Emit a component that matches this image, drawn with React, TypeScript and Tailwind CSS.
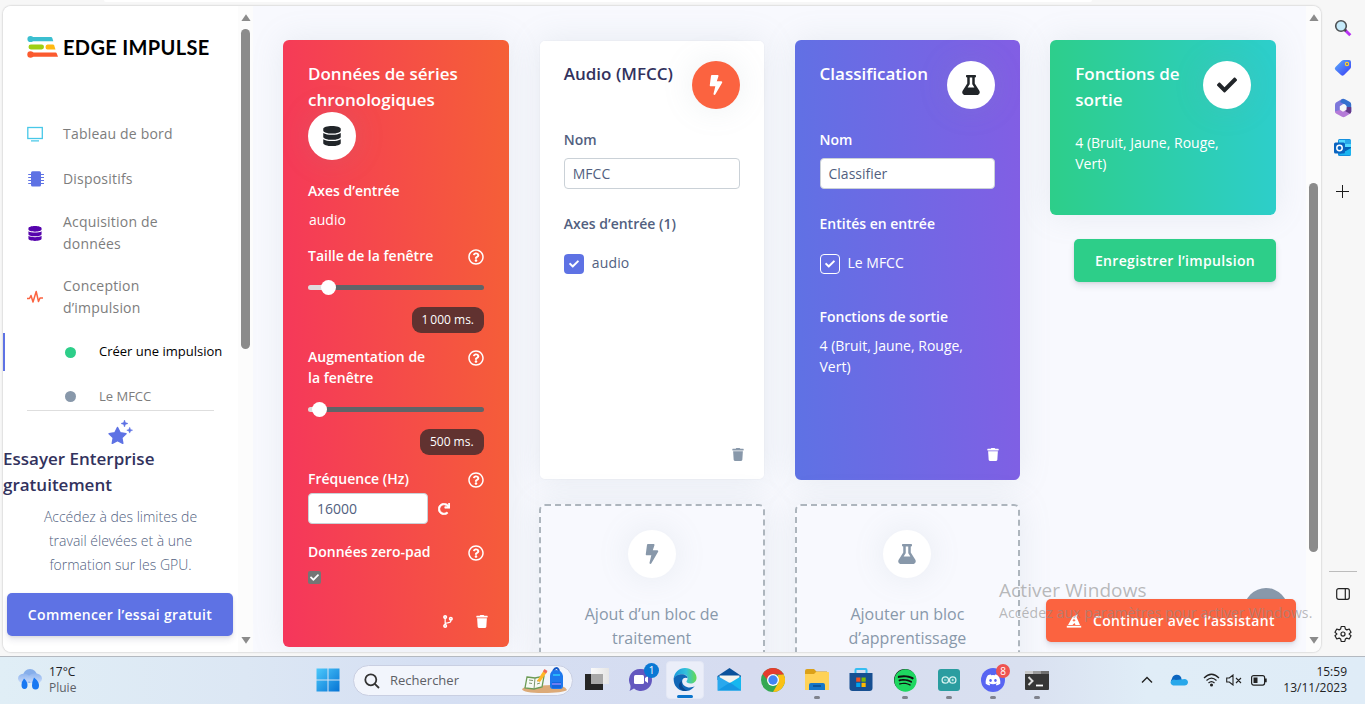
import React from 'react';
import { FaBolt, FaCheck, FaCodeBranch, FaDatabase, FaDiscord, FaFlask, FaRedo, FaRegQuestionCircle, FaSpotify, FaTrash } from 'react-icons/fa';

function Logo() {
  return (
    <div className="ml-6 flex h-6 items-center gap-[5px]">
      <svg width="31" height="24" viewBox="0 0 31 24">
        <g fill="#3bbfd0"><circle cx="3.5" cy="4" r="3.1" /><path d="M3 2h21q1 0 1.300 1l1 3.200H3z" /></g>
        <rect x="1.500" y="9.500" width="15.500" height="5" rx="2.400" fill="#9ecf14" />
        <path d="M20.500 9.500h5.500q.8 0 1.200 1l1.300 4h-8q-2 0-2-2.500t2-2.500z" fill="#ffb911" />
        <g fill="#fb5a2e"><circle cx="3.500" cy="19.500" r="3.200" /><path d="M3 17.500h25.500q1 0 1.300 1l1.200 3.300H3z" /></g>
      </svg>
      <span className="whitespace-nowrap font-['Lato',sans-serif] text-[20px] font-bold leading-6 tracking-[0.35px] text-black">EDGE IMPULSE</span>
    </div>
  );
}

function NavItem({ icon, children, height }: { icon: React.ReactNode; children: React.ReactNode; height: string }) {
  return (
    <div className={`flex items-center pl-6 text-[14px] leading-[22px] tracking-[0.2px] text-[#7d7d7d] ${height}`}>
      <span className="flex w-9 shrink-0">{icon}</span>
      <span>{children}</span>
    </div>
  );
}

function ScrollBar({ thumb }: { thumb: string }) {
  return (
    <div className="flex h-full w-[15px] shrink-0 flex-col items-center bg-[#fcfcfc] py-2">
      <svg width="10" height="7" className="shrink-0"><path d="M5 0.300L9.600 7H.4z" fill="#8b8b8b" /></svg>
      <div className={`w-[9px] shrink-0 rounded-full bg-[#8b8b8b] ${thumb}`} />
      <svg width="10" height="7" className="mt-auto shrink-0"><path d="M.4 0h9.200L5 6.700z" fill="#8b8b8b" /></svg>
    </div>
  );
}

function Sidebar() {
  return (
    <aside className="flex w-[235px] shrink-0 flex-col bg-white">
      <div className="h-[29px]" />
      <Logo />
      <div className="h-[52px]" />
      <NavItem height="h-[45px]" icon={<svg width="16" height="16" viewBox="0 0 16 16" fill="none" stroke="#48c8e8" strokeWidth="1.300"><rect x=".8" y="1.500" width="14.500" height="11" /><path d="M4 14.800h8" /></svg>}>Tableau de bord</NavItem>
      <NavItem height="h-[45px]" icon={<svg width="18" height="16" viewBox="0 0 18 16"><rect x="4" y=".3" width="10" height="15.200" rx="1.500" fill="#5e72e4" /><path d="M1.200 3.500H17M1.200 6.500H17M1.200 9.500H17M1.200 12.500H17" stroke="#5e72e4" strokeWidth="1.200" /></svg>}>Dispositifs</NavItem>
      <NavItem height="h-[64px]" icon={<FaDatabase className="ml-[1px] h-[15px] w-[14px] text-[#5603ad]" />}>Acquisition de<br />données</NavItem>
      <NavItem height="h-[64px]" icon={<svg width="16" height="14" viewBox="0 0 16 14" fill="none" stroke="#fb6340" strokeWidth="1.500" strokeLinejoin="round"><path d="M0 8.500h2.500L4 5.500l2 6.500L9.200 1.500 11.500 11.500 13 8H16" /></svg>}>Conception<br />d’impulsion</NavItem>
      <div className="flex h-[38px] items-center border-l-2 border-[#5e72e4] pl-[60px] text-[13px] text-black mt-[4px]">
        <i className="h-[11px] w-[11px] rounded-full bg-[#2dce89]" /><span className="ml-[23px] whitespace-nowrap">Créer une impulsion</span>
      </div>
      <div className="mt-[6px] flex h-[33px] items-start overflow-hidden pl-[62px] pt-[9px] text-[13px] text-[#7d7d7d]">
        <i className="mt-[5px] h-[11px] w-[11px] rounded-full bg-[#8898aa]" /><span className="ml-[23px] leading-5">Le MFCC</span>
      </div>
      <div className="ml-6 h-px w-[187px] shrink-0 bg-[#dedede]" />
      <svg className="ml-[105px] mt-[8px] shrink-0" width="26" height="26" viewBox="0 0 26 26" fill="#5e72e4" stroke="#5e72e4" strokeLinejoin="round">
        <path strokeWidth="1.500" d="M9.500 8.500l2.700 5.300 5.800.9-4.200 4 1 5.600-5.300-2.700-5.200 2.700 1-5.600-4.200-4 5.800-.9z" />
        <path strokeWidth=".5" d="M16.500 1l.9 2.600 2.600.9-2.600.9-.9 2.600-.9-2.600L13 4.500l2.600-.9zM21.700 8.300l.8 2.100 2.100.8-2.100.8-.8 2.100-.8-2.100-2.100-.8 2.100-.8z" />
      </svg>
      <div className="mt-[1px] text-[17px] font-semibold leading-[26px] text-[#32325d]">Essayer Enterprise gratuitement</div>
      <p className="mt-[7px] text-center text-[14px] font-light leading-6 text-[#525f7f]">Accédez à des limites de<br />travail élevées et à une<br />formation sur les GPU.</p>
      <button className="ml-1 mt-4 h-[43px] w-[226px] shrink-0 whitespace-nowrap rounded-[5px] bg-[#5e72e4] text-[14px] font-semibold tracking-[0.35px] text-white shadow-[0_4px_6px_rgba(50,50,93,.11),0_1px_3px_rgba(0,0,0,.08)]">Commencer l’essai gratuit</button>
    </aside>
  );
}

function Disc({ children, className = 'bg-white text-[#212529]' }: { children: React.ReactNode; className?: string }) {
  return <div className={`flex h-12 w-12 shrink-0 items-center justify-center rounded-full shadow-[0_0_32px_rgba(136,152,170,.15)] ${className}`}>{children}</div>;
}

function Label({ children, className = '' }: { children: React.ReactNode; className?: string }) {
  return <div className={`text-[14px] font-semibold leading-[21px] ${className}`}>{children}</div>;
}

function HelpRow({ children, className }: { children: React.ReactNode; className: string }) {
  return (
    <div className={`flex items-start justify-between ${className}`}>
      <Label>{children}</Label>
      <FaRegQuestionCircle className="mt-[4px] h-4 w-4 shrink-0" />
    </div>
  );
}

function RangeBar({ fill, className }: { fill: string; className: string }) {
  return (
    <div className={`flex h-[15px] items-center ${className}`}>
      <div className={`h-[5px] rounded-l-full bg-[#e0dcdc] ${fill}`} />
      <div className="z-10 -mx-[2px] h-[15px] w-[15px] rounded-full bg-white" />
      <div className="h-[5px] flex-1 rounded-r-full bg-[#606468]" />
    </div>
  );
}

function Pill({ children, className }: { children: React.ReactNode; className: string }) {
  return <div className={`ml-auto flex h-[26px] items-center justify-center rounded-[9px] bg-[#613230] text-[12px] font-medium text-white ${className}`}>{children}</div>;
}

const shadow = 'shadow-[0_0_32px_rgba(136,152,170,.15)]';
const input = 'flex h-[31px] items-center rounded-[4px] border border-[#cad1d7] bg-white px-2 text-[14px] text-[#525f7f]';

function Cards() {
  return (
    <div className="grid grid-cols-4 items-start gap-[30px] pl-[30px] pr-[30px] pt-[34px]">
      <section className={`flex h-[607px] flex-col rounded-[6px] bg-[linear-gradient(87deg,#f5365c_0%,#f56036_100%)] px-[25px] pt-[21px] text-white ${shadow}`}>
        <h2 className="text-[17px] font-semibold leading-[26px]">Données de séries chronologiques</h2>
        <div className="-mt-[1px]"><Disc><FaDatabase className="h-5 w-5" /></Disc></div>
        <Label className="mt-[20px]">Axes d’entrée</Label>
        <div className="mt-2 pl-px text-[14px] leading-[21px]">audio</div>
        <HelpRow className="mt-[15px]">Taille de la fenêtre</HelpRow>
        <RangeBar fill="w-[15px]" className="mt-[14px]" />
        <Pill className="mt-[12px] w-[72px]">1{'\u2009'}000 ms.</Pill>
        <HelpRow className="mt-[13px]">Augmentation de<br />la fenêtre</HelpRow>
        <RangeBar fill="w-[6px]" className="mt-[14px]" />
        <Pill className="mt-[12px] w-[64px]">500 ms.</Pill>
        <HelpRow className="mt-[13px]">Fréquence (Hz)</HelpRow>
        <div className="mt-[4px] flex items-center gap-[10px]"><div className={`${input} w-[120px]`}>16000</div><FaRedo className="h-3 w-3" stroke="white" strokeWidth="24" /></div>
        <HelpRow className="mt-[17px]">Données zero-pad</HelpRow>
        <div className="mt-[9px] flex h-[13px] w-[13px] items-center justify-center rounded-[2px] bg-[#757575]"><FaCheck className="h-[9px] w-[9px]" /></div>
        <div className="mt-[31px] flex items-center justify-end gap-[22px]"><FaCodeBranch className="h-[13px] w-[12px]" /><FaTrash className="-mr-[4px] h-[13px] w-[12px]" /></div>
      </section>

      <div className="flex flex-col gap-6">
        <section className={`flex h-[440px] flex-col rounded-[6px] border border-black/[.015] bg-white bg-clip-padding px-6 pt-5 text-[#525f7f] ${shadow}`}>
          <div className="flex items-start justify-between">
            <h2 className="whitespace-nowrap text-[17px] font-semibold leading-[26px] text-[#32325d]">Audio (MFCC)</h2>
            <Disc className="bg-[#fb6340] text-white"><FaBolt className="h-5 w-5" /></Disc>
          </div>
          <Label className="mt-[20px]">Nom</Label>
          <div className={`${input} mt-[8px]`}>MFCC</div>
          <Label className="mt-[24px]">Axes d’entrée (1)</Label>
          <div className="mt-[20px] flex items-center text-[14px] leading-5"><span className="mr-2 flex h-5 w-5 items-center justify-center rounded-[4px] bg-[#5e72e4] text-white"><FaCheck className="h-[10px] w-[10px]" /></span><span className="-mt-[2px] tracking-[0.15px]">audio</span></div>
          <FaTrash className="-mr-[4px] mb-[18px] ml-auto mt-auto h-[13px] w-[12px] text-[#8898aa]" />
        </section>
        <Placeholder icon={<FaBolt className="h-5 w-5" />}>Ajout d’un bloc de<br />traitement</Placeholder>
      </div>

      <div className="flex flex-col gap-6">
        <section className={`flex h-[440px] flex-col rounded-[6px] bg-[linear-gradient(87deg,#5e72e4_0%,#825ee4_100%)] px-[25px] pt-[21px] text-white ${shadow}`}>
          <div className="flex items-start justify-between">
            <h2 className="whitespace-nowrap text-[17px] font-semibold leading-[26px]">Classification</h2>
            <Disc><FaFlask className="h-5 w-5" /></Disc>
          </div>
          <Label className="mt-[20px]">Nom</Label>
          <div className={`${input} mt-[8px]`}>Classifier</div>
          <Label className="mt-[24px]">Entités en entrée</Label>
          <div className="mt-[20px] flex items-center text-[14px] leading-5"><span className="mr-2 flex h-5 w-5 items-center justify-center rounded-[4px] border border-white"><FaCheck className="h-[10px] w-[10px]" /></span><span className="-mt-[2px]">Le MFCC</span></div>
          <Label className="mt-[32px]">Fonctions de sortie</Label>
          <div className="mt-2 text-[14px] leading-[21px]">4 (Bruit, Jaune, Rouge,<br />Vert)</div>
          <FaTrash className="-mr-[4px] mb-[19px] ml-auto mt-auto h-[13px] w-[12px]" />
        </section>
        <Placeholder icon={<FaFlask className="h-5 w-5" />}>Ajouter un bloc<br />d’apprentissage</Placeholder>
      </div>

      <div className="flex flex-col gap-6">
        <section className={`flex h-[175px] flex-col rounded-[6px] bg-[linear-gradient(87deg,#2dce89_0%,#2dcecc_100%)] px-[25px] pt-[21px] text-white ${shadow}`}>
          <div className="flex items-start justify-between">
            <h2 className="text-[17px] font-semibold leading-[26px]">Fonctions de<br />sortie</h2>
            <Disc><FaCheck className="h-5 w-5" /></Disc>
          </div>
          <div className="mt-[19px] text-[14px] leading-[21px]">4 (Bruit, Jaune, Rouge,<br />Vert)</div>
        </section>
        <button className="ml-auto h-[43px] w-[202px] whitespace-nowrap rounded-[5px] bg-[#2dce89] text-[14px] font-semibold tracking-[0.35px] text-white shadow-[0_4px_6px_rgba(50,50,93,.11),0_1px_3px_rgba(0,0,0,.08)]">Enregistrer l’impulsion</button>
      </div>
    </div>
  );
}

function Placeholder({ icon, children }: { icon: React.ReactNode; children: React.ReactNode }) {
  return (
    <section className={`flex h-[230px] flex-col items-center rounded-[6px] border-2 border-dashed border-[#adb5bd] bg-[#f8f9fe] pt-6 text-center ${shadow}`}>
      <Disc className="bg-white text-[#8898aa]">{icon}</Disc>
      <div className="mt-6 text-[16px] leading-6 text-[#8898aa]">{children}</div>
    </section>
  );
}

function EdgeRail() {
  return (
    <aside className="flex w-[43px] shrink-0 flex-col items-center">
      <svg className="mt-[17px] shrink-0" width="18" height="18" viewBox="0 0 18 18"><path d="M11 11l5.300 5.300" stroke="#b832f2" strokeWidth="3" /><path d="M10 10l2 2" stroke="#444" strokeWidth="2.500" /><circle cx="7" cy="7" r="5.300" fill="#c5eafa" stroke="#4d5053" strokeWidth="1.600" /></svg>
      <svg className="mt-[22px] shrink-0" width="18" height="18" viewBox="0 0 18 18"><defs><linearGradient id="tag" x2="1" y2="1"><stop stopColor="#5bb0fb" /><stop offset="1" stopColor="#3a3af5" /></linearGradient></defs><path d="M10 1h5q2 0 2 2v5q0 1-1 2l-6 6q-1.500 1.500-3 0L1.500 11Q0 9.500 1.500 8l6-6Q8.500 1 10 1z" fill="url(#tag)" /><circle cx="13" cy="5" r="1.600" fill="#4a64d0" stroke="#ffd42a" strokeWidth="1.200" /></svg>
      <svg className="mt-[21px] shrink-0" width="18" height="20" viewBox="0 0 18 20"><path d="M8 1L2 4.500Q1 5 1 7v7l6 3V9.500q0-2 2-3l4-2z" fill="#7d78db" /><path d="M8 1q1.500-.8 3 .2L16 4q1.200.8 1.200 2.500V14l-4.500-2.500V9q0-1.500-1.500-2.500L6 4z" fill="#3570ce" /><path d="M17.200 10v3.500q0 1.500-1.200 2.300l-5 3q-1.500.9-3 0l-6-3.300Q1 14.800 1 13.300l6-1.500 2 1.200 2.500-1z" fill="#b57bd8" /><path d="M17.200 9v4.500q0 1.500-1.200 2.300L11 13q2-1 1.800-4z" fill="#653989" /><path d="M9 6.300l3.200 1.900v3.600L9 13.700l-3.200-1.900V8.200z" fill="#f7f7f7" /></svg>
      <svg className="mt-[21px] shrink-0" width="17" height="17" viewBox="0 0 17 17"><rect x="4" width="13" height="17" rx="1.500" fill="#1490df" /><path d="M5 1h12v7H5z" fill="#50d9ff" /><path d="M11 1h6v4h-6z" fill="#28a8ea" /><path d="M11 8h6v4h-6z" fill="#0364b8" /><path d="M5 16l12-7v7z" fill="#1bb5f0" /><rect y="3.500" width="11" height="11" rx="1.500" fill="#0a64c0" /><circle cx="5.500" cy="9" r="2.700" fill="none" stroke="#fff" strokeWidth="1.500" /></svg>
      <svg className="mt-[29px] shrink-0" width="13" height="13"><path d="M6.500 0v13M0 6.500h13" stroke="#1c1c1c" strokeWidth="1" /></svg>
      <div className="mt-auto h-px w-7 bg-[#bcbcbc]" />
      <svg className="mt-[16px]" width="14" height="12" fill="none" stroke="#222" strokeWidth="1.200"><rect x=".7" y=".7" width="12.600" height="10.600" rx="2" /><path d="M9.300 1v10" /></svg>
      <svg className="mb-[13px] mt-[25px]" width="18" height="18" viewBox="0 0 24 24" fill="none" stroke="#222" strokeWidth="1.600" strokeLinejoin="round"><path d="M9.600 2h4.800l.7 3.300 2 1.200 3.200-1.100 2.400 4.200-2.500 2.200v.4l2.500 2.200-2.400 4.200-3.200-1.100-2 1.200-.7 3.300H9.600l-.7-3.300-2-1.200-3.200 1.100-2.400-4.200 2.500-2.200v-.4L1.300 9.600l2.400-4.200 3.200 1.100 2-1.200z" /><circle cx="12" cy="12" r="2.700" /></svg>
    </aside>
  );
}

function AppIcon({ children, running = false, badge }: { children: React.ReactNode; running?: boolean; badge?: React.ReactNode }) {
  return (
    <div className="relative flex h-[47px] w-11 shrink-0 flex-col items-center pt-[11px]">
      <div className="flex h-6 w-6 items-center justify-center">{children}</div>
      {running && <div className="mt-[4px] h-[3px] w-[6px] rounded-full bg-[#7f828c]" />}
      {badge}
    </div>
  );
}

function Taskbar() {
  return (
    <footer className="flex h-12 shrink-0 border-t border-[#b4b9c0] bg-[linear-gradient(90deg,#e0eef6_0%,#dce7f4_18%,#d5dff3_32%,#d6dcf0_55%,#d9e0f0_75%,#e0edf7_84%,#dfecf7_100%)] font-['Open_Sans','Noto_Sans',sans-serif]">
      <div className="flex w-[306px] items-start pl-[17px] pt-[8px]">
        <svg width="26" height="26" viewBox="0 0 26 26"><defs><linearGradient id="cl" y2="1" x2="0"><stop stopColor="#8fb5ef" /><stop offset="1" stopColor="#cbdcfa" /></linearGradient></defs><circle cx="13" cy="11" r="7" fill="#86aeea" /><ellipse cx="7" cy="13.500" rx="6" ry="4.800" fill="url(#cl)" /><ellipse cx="18" cy="13.500" rx="7" ry="5.200" fill="url(#cl)" /><path d="M7 13.500q3.500 3 3.500 6.500 0 4-3 4T4.500 20q0-3.500 2.500-6.500zM17 12.500q5 4 5 8 0 4-3.500 4t-3.500-4q0-4 2-8z" fill="#1878f2" /></svg>
        <div className="-mt-px ml-[6px] text-[12px] leading-4 text-[#202124]">17°C<br /><span className="text-[#5c6066]">Pluie</span></div>
      </div>
      <AppIcon><svg width="24" height="24"><defs><linearGradient id="win" x2="1" y2="1"><stop stopColor="#4cc9fb" /><stop offset="1" stopColor="#0673d4" /></linearGradient></defs><path d="M.5.500h11v11H.5zM12.500.5h11v11h-11zM.5 12.500h11v11H.5zM12.500 12.500h11v11h-11z" fill="url(#win)" /></svg></AppIcon>
      <div className="ml-[3px] mt-[8px] flex h-[31px] w-[220px] items-center rounded-full border border-[#c9cfe2] bg-[#f2f5fc] pl-[10px]">
        <svg width="16" height="16" fill="none" stroke="#333" strokeWidth="1.800"><circle cx="6.800" cy="6.800" r="5.500" /><path d="M10.800 10.800l4.200 4.200" /></svg>
        <span className="ml-[10px] text-[13px] text-[#5d6066]">Rechercher</span>
        <svg className="ml-auto mr-[4px]" width="46" height="28" viewBox="0 0 46 28"><path d="M0 22q3-3 10-3l20-1q13 0 15 5-4 3-24 3T0 22z" fill="#dcaa78" /><path d="M5 10l8 1 9-2-2 11-8 2-9-1z" fill="#f6faf4" stroke="#6b9b55" strokeWidth="1.300" /><path d="M13 11l-1 11M7 13l4 .5M7 16l3 .5M15 14l4-1M15 17l3-1" stroke="#7d966f" /><path d="M15 14l7-11 3 2-7 10z" fill="#ffb629" /><path d="M21 4.500L22.500 2l3 2-1.500 2.500z" fill="#f06a5c" /><path d="M31 4q4-6 6 0" fill="none" stroke="#1559c7" strokeWidth="2" /><path d="M28 9q0-6 6-6t7 6v10q0 3-3 3h-7q-3 0-3-3z" fill="#1d78ed" /><path d="M30 15h9v6h-9z" fill="#1465dd" /><path d="M30 17h9" stroke="#9c8dfd" strokeWidth="1.300" /><path d="M31 8h7" stroke="#2ab5fa" strokeWidth="2" /></svg>
      </div>
      <div className="ml-[2px] flex">
        <AppIcon><svg width="24" height="24"><defs><linearGradient id="tv" x2="1"><stop stopColor="#fafafa" /><stop offset="1" stopColor="#e5e5e5" /></linearGradient></defs><rect y="6" width="18" height="16" fill="#262626" /><rect x="6" width="18" height="16" fill="url(#tv)" /><rect x="6" y="6" width="12" height="10" fill="#a9a9a9" /></svg></AppIcon>
        <AppIcon badge={<span className="absolute right-[4px] top-[6px] flex h-[15px] w-[15px] items-center justify-center rounded-full bg-[#0a78d4] text-[10px] text-white">1</span>}><svg width="24" height="24"><path d="M12 1a11 11 0 1 1-7 19.500L.5 23q1.500-3 .8-6A11 11 0 0 1 12 1z" fill="#6358bf" /><rect x="5" y="7" width="10" height="9" rx="1.500" fill="#fff" /><path d="M16 10l3-2v7l-3-2z" fill="#fff" /></svg></AppIcon>
        <div className="flex h-[47px] w-11 items-start justify-center pt-[4px]"><div className="flex h-[38px] w-[38px] flex-col items-center rounded-[4px] border border-[#e4e8f5] bg-[#ebeef9] pt-[6px]"><svg width="24" height="24" viewBox="0 0 24 24"><defs><linearGradient id="ed" x2="1"><stop stopColor="#1999dd" /><stop offset=".55" stopColor="#34c1dc" /><stop offset="1" stopColor="#66db4e" /></linearGradient></defs><path d="M.2 11C1 4.500 5.600 0 12 0s12 4.500 12 10c0 4-3 6-6.300 6-2.800 0-4.200-1-4.200-2 0-.8 1.200-1.200 1.200-3.300C14.700 8 12 6.500 9 6.500 5 6.500 1.500 8.500.2 11z" fill="url(#ed)" /><path d="M.2 11C1.500 8 5.500 6.400 9 6.500c3 .1 5.700 2 5.700 4.200-1-1.200-5.700-1.200-5.700 3 0 4 4 6.500 8 6.500 2 0 3.600-.5 5.200-1.500C20 22 16.500 24 12 24 5 24 0 18.500.2 11z" fill="#1167b7" /><path d="M9 13.500C7.500 17 9.500 21.500 14 23.900 6 24.500 2.500 16.500 9 13.500z" fill="#0b478f" /></svg><div className="mt-[4px] h-[3px] w-4 rounded-full bg-[#0a74cc]" /></div></div>
        <AppIcon><svg width="25" height="24"><path d="M.5 8L12.500 0l12 8v4H.5z" fill="#0b529b" /><path d="M2.500 7.500h20V14l-10 5-10-5z" fill="#f5f4ef" /><path d="M.5 8l14 8L.5 22.500z" fill="#2aa8ed" /><path d="M24.500 8L.5 22.500h24z" fill="#16b7ef" /><path d="M.5 22.500h24L13 14.500z" fill="#1697e3" /></svg></AppIcon>
        <AppIcon><svg width="24" height="24" viewBox="0 0 24 24"><circle cx="12" cy="12" r="12" fill="#34a853" /><path d="M1.600 6A12 12 0 0 1 22.400 6H12L9 15z" fill="#e53c2e" /><path d="M22.400 6A12 12 0 0 1 12 24l5.200-9L17 7z" fill="#fbc116" /><path d="M12 6h10.400" stroke="#e53c2e" /><circle cx="12" cy="12" r="6" fill="#fff" /><circle cx="12" cy="12" r="4.700" fill="#4285f4" /></svg></AppIcon>
        <AppIcon running><svg width="25" height="24"><path d="M0 3q0-2 2-2h7l2.500 2.500H22v5H0z" fill="#dba119" /><path d="M0 6h9l2-2h12q2 0 2 2v16H0z" fill="#ffd257" /><path d="M4 22v-5q0-2 2-2h12q2 0 2 2v5z" fill="#1677c9" /><path d="M8 17h8v2H8z" fill="#0b559c" /></svg></AppIcon>
        <AppIcon><svg width="24" height="24"><path d="M6.500 5V2q0-1 1-1h9q1 0 1 1v3" stroke="#35bdf2" strokeWidth="2" fill="none" /><path d="M.5 5h23v15q0 3-3 3h-17q-3 0-3-3z" fill="#174f91" /><path d="M7.200 9.500h4.200v4.200H7.200z" fill="#f25022" /><path d="M12.500 9.500h4.200v4.200h-4.200z" fill="#7fba00" /><path d="M7.200 14.800h4.200V19H7.200z" fill="#00a4ef" /><path d="M12.500 14.800h4.200V19h-4.200z" fill="#ffb900" /></svg></AppIcon>
        <AppIcon running><span className="flex h-[22px] w-[22px] items-center justify-center rounded-full bg-[#101010]"><FaSpotify className="h-[23px] w-[23px] shrink-0 text-[#1ed760]" /></span></AppIcon>
        <AppIcon running><svg width="22" height="22"><rect width="22" height="22" rx="3" fill="#2a9da0" /><g fill="none" stroke="#d5f2f0" strokeWidth="1.300"><circle cx="7.300" cy="11" r="3.200" /><circle cx="14.700" cy="11" r="3.200" /><path d="M6 11h2.500M13.500 11H16M14.700 9.800v2.400" strokeWidth=".8" /></g></svg></AppIcon>
        <AppIcon running badge={<span className="absolute right-[5px] top-[7px] flex h-[14px] w-[14px] items-center justify-center rounded-full bg-[#ef5350] text-[10px] text-white">8</span>}><span className="flex h-6 w-6 items-center justify-center rounded-full bg-[#5865f2]"><FaDiscord className="h-[16px] w-[16px] text-white" /></span></AppIcon>
        <AppIcon running><svg width="24" height="20"><rect width="24" height="19" rx="1" y="1" fill="#363636" /><path d="M0 1h8v3H0z" fill="#c8c8c8" /><path d="M8 1h8v3H8z" fill="#9b9b9b" /><path d="M16 1h8v3h-8z" fill="#6f6f6f" /><path d="M3.500 7l4 4-4 4" fill="none" stroke="#ddd" strokeWidth="2" /><path d="M11 15.500h7" stroke="#fff" strokeWidth="1.800" /></svg></AppIcon>
      </div>
      <div className="ml-auto flex items-start pr-[18px]">
        <svg className="mt-[19px]" width="12" height="8" fill="none" stroke="#222" strokeWidth="1.400"><path d="M1 6.500L6 1.500l5 5" /></svg>
        <svg className="ml-[17px] mt-[17px]" width="18" height="12"><path d="M5 11A4 4 0 0 1 2 4.500 5 5 0 0 1 11 3l2 8z" fill="#0b65c0" /><path d="M3 11.500Q-.5 10 1 7q2-2.500 5-1l9-1q3 .500 3 3.500-.5 3-3.500 3z" fill="#28a8ea" /></svg>
        <svg className="ml-[15px] mt-[16px]" width="17" height="14" fill="none" stroke="#222" strokeWidth="1.200"><path d="M1 5Q8.500-2.500 16 5M3.500 7.500q5-4.800 10 0M5.500 10q3-2.800 6 0" /><circle cx="8.500" cy="12" r=".9" fill="#222" /></svg>
        <svg className="ml-[6px] mt-[17px]" width="16" height="12" fill="none" stroke="#222" strokeWidth="1.100"><path d="M.7 4h2.600L7 1v10L3.300 8H.7zM10 4l5 5M15 4l-5 5" /></svg>
        <svg className="ml-[9px] mt-[18px]" width="16" height="11"><rect x=".6" y=".6" width="13" height="9.500" rx="2" fill="none" stroke="#222" strokeWidth="1.200" /><path d="M2.500 2.500h4v5.600h-4zM14 3.500h1.700v3.700H14z" fill="#222" /></svg>
        <div className="ml-[16px] mt-[7px] whitespace-nowrap text-right text-[12px] leading-4 text-[#222]">15:59<br />13/11/2023</div>
      </div>
    </footer>
  );
}

export default function App() {
  return (
    <div className="relative flex h-[704px] w-[1365px] flex-col overflow-hidden bg-[#f7f7f7] font-['Open_Sans','Noto_Sans',sans-serif]">
      <div className="flex h-[656px] shrink-0 flex-col">
        <div className="ml-[104px] h-[2px] w-[988px] rounded-b-[3px] bg-white" />
        <div className="flex h-[654px]">
          <div className="ml-[3px] mt-[4px] flex h-[646px] w-[1318px] overflow-hidden rounded-[8px] bg-[#f8f9fe] shadow-[0_0_2px_rgba(0,0,0,.3)]">
            <Sidebar />
            <ScrollBar thumb="mt-[8px] h-[320px]" />
            <main className="relative min-w-0 flex-1 overflow-hidden">
              <Cards />
              <div className="absolute left-[991px] top-[582px] h-11 w-11 rounded-full bg-[#8898aa]" />
              <button className="absolute left-[793px] top-[593px] flex h-[43px] w-[250px] items-center whitespace-nowrap rounded-[5px] bg-[#fb6340] pl-[20px] text-[14px] font-semibold tracking-[0.35px] text-white shadow-[0_4px_6px_rgba(50,50,93,.11),0_1px_3px_rgba(0,0,0,.08)]">
                <svg className="mr-[11px]" width="16" height="16" viewBox="0 0 16 16" fill="#fff"><path d="M2 12L6.500 4 12 1l-1.500 3L14 12H9.500l-1-2-2 2z" /><path d="M.8 12.800h14.400v1.800H.8z" /><path d="M8 5.500l.6 1.200 1.200.5-1.200.5L8 9l-.6-1.300-1.200-.5 1.200-.5z" fill="#fb6340" /></svg>
                Continuer avec l’assistant
              </button>
            </main>
            <ScrollBar thumb="mt-[162px] h-[369px]" />
          </div>
          <div className="flex h-full"><EdgeRail /></div>
        </div>
      </div>
      <Taskbar />
      <div className="pointer-events-none absolute left-[999px] top-[577px] whitespace-nowrap text-[#8c8c8c]/60">
        <div className="text-[19px] leading-[26px] tracking-[0.08px]">Activer Windows</div>
        <div className="text-[14px] leading-5 tracking-[0.1px]">Accédez aux paramètres pour activer Windows.</div>
      </div>
    </div>
  );
}
